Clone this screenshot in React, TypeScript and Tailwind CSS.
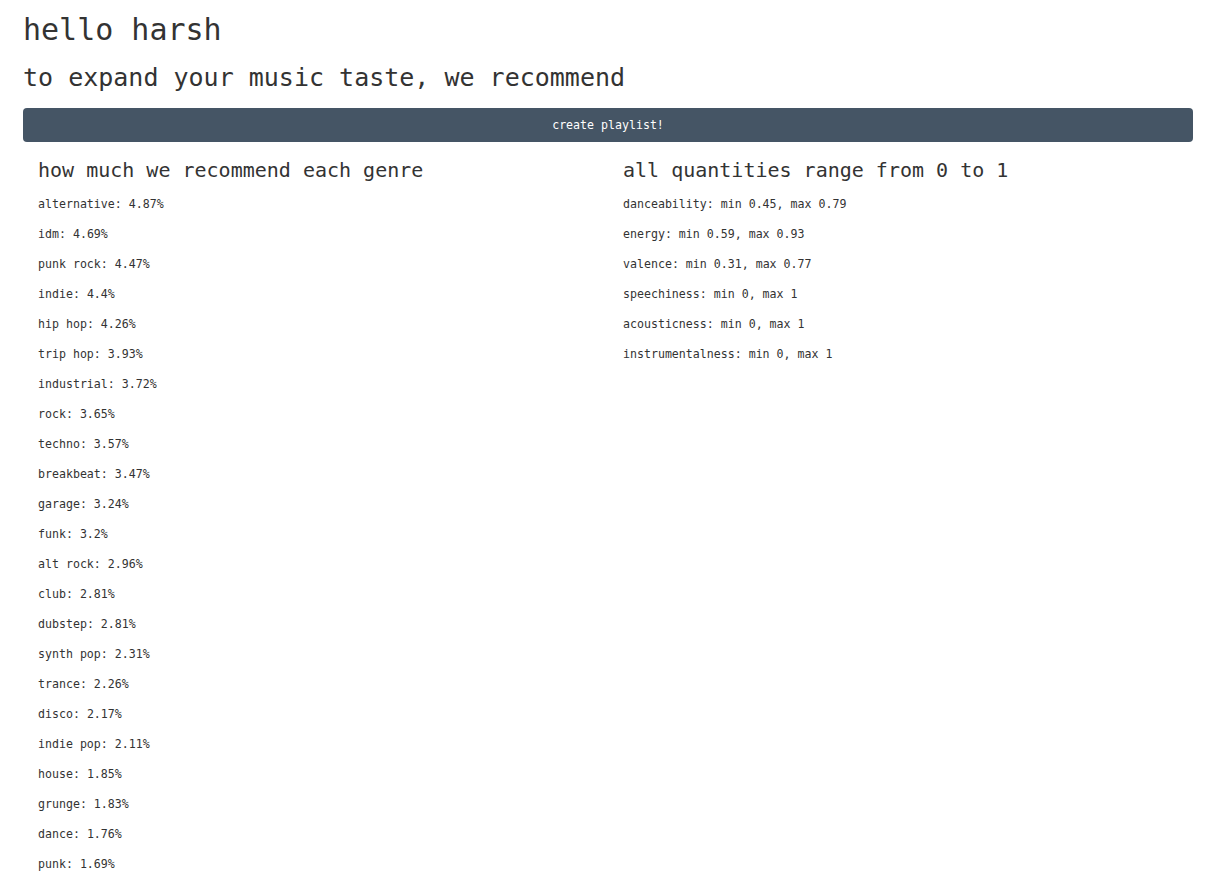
import React from "react";

const genres: [string, string][] = [
  ["alternative", "4.87"],
  ["idm", "4.69"],
  ["punk rock", "4.47"],
  ["indie", "4.4"],
  ["hip hop", "4.26"],
  ["trip hop", "3.93"],
  ["industrial", "3.72"],
  ["rock", "3.65"],
  ["techno", "3.57"],
  ["breakbeat", "3.47"],
  ["garage", "3.24"],
  ["funk", "3.2"],
  ["alt rock", "2.96"],
  ["club", "2.81"],
  ["dubstep", "2.81"],
  ["synth pop", "2.31"],
  ["trance", "2.26"],
  ["disco", "2.17"],
  ["indie pop", "2.11"],
  ["house", "1.85"],
  ["grunge", "1.83"],
  ["dance", "1.76"],
  ["punk", "1.69"],
];

const features: [string, string, string][] = [
  ["danceability", "0.45", "0.79"],
  ["energy", "0.59", "0.93"],
  ["valence", "0.31", "0.77"],
  ["speechiness", "0", "1"],
  ["acousticness", "0", "1"],
  ["instrumentalness", "0", "1"],
];

export default function App() {
  return (
    <div className="min-h-screen bg-white text-[#333] font-['DejaVu_Sans_Mono',monospace]">
      <div className="w-[1170px] ml-[23px]">
        {/* Header */}
        <h1 className="pt-[10px] mb-[11px] text-[30px] leading-[39.6px]">hello harsh</h1>
        <h2 className="mb-[14px] text-[25px] leading-[33px]">
          to expand your music taste, we recommend
        </h2>

        <button className="w-full h-[34px] rounded-[4px] bg-[#455565] text-white text-[11.6px] leading-[20px]">
          create playlist!
        </button>

        {/* Two columns */}
        <div className="grid grid-cols-2">
          <div className="px-[15px]">
            <h3 className="mt-[15px] mb-[11px] text-[20px] leading-[26.4px]">
              how much we recommend each genre
            </h3>
            {genres.map(([name, pct]) => (
              <p key={name} className="mb-[10px] text-[11.6px] leading-[20px]">
                {name}: {pct}%
              </p>
            ))}
          </div>
          <div className="px-[15px]">
            <h3 className="mt-[15px] mb-[11px] text-[20px] leading-[26.4px]">
              all quantities range from 0 to 1
            </h3>
            {features.map(([name, min, max]) => (
              <p key={name} className="mb-[10px] text-[11.6px] leading-[20px]">
                {name}: min {min}, max {max}
              </p>
            ))}
          </div>
        </div>
      </div>
    </div>
  );
}
